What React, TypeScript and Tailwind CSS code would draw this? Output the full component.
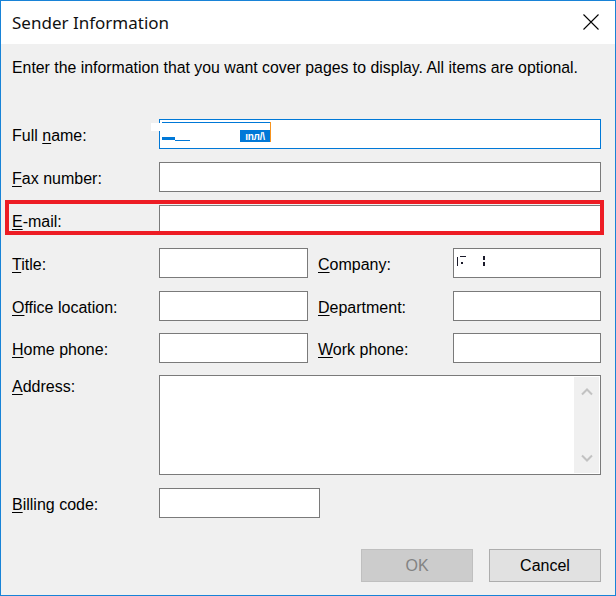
import React from "react";

const U = ({ children }: { children: React.ReactNode }) => (
  <span className="underline decoration-1 underline-offset-[2px]">{children}</span>
);

const Input = ({ className = "" }: { className?: string }) => (
  <div className={`h-[30px] bg-white border border-[#7a7a7a] ${className}`} />
);

const Label = ({ children, w }: { children: React.ReactNode; w: string }) => (
  <div className={`${w} shrink-0 pt-[3px] leading-[18px]`}>{children}</div>
);

export default function App() {
  return (
    <div
      className="w-[616px] h-[596px] border border-[#1883d7] bg-[#f0f0f0] flex flex-col text-[16px] text-black"
      style={{ fontFamily: '"Liberation Sans", Arial, sans-serif' }}
    >
      {/* Title bar */}
      <div className="h-[43px] bg-white flex items-center justify-between pl-[11px] pr-[16px] shrink-0">
        <div
          className="text-[17px] leading-[20px] text-[#111] pt-[1px]"
          style={{ fontFamily: '"Noto Sans", "Open Sans", sans-serif' }}
        >
          Sender Information
        </div>
        <svg width="16" height="16" viewBox="0 0 16 16" className="-mt-[1px]">
          <path d="M0.5 0.5 L15.5 15.5 M15.5 0.5 L0.5 15.5" stroke="#000" strokeWidth="1.1" fill="none" />
        </svg>
      </div>

      {/* Body */}
      <div className="flex flex-col pl-[11px] pr-[14px]">
        <div className="mt-[15px] leading-[18px] text-[15.85px]">
          Enter the information that you want cover pages to display. All items are optional.
        </div>

        {/* Full name */}
        <div className="relative flex items-center mt-[42px]">
          <Label w="w-[147px]">
            Full <U>n</U>ame:
          </Label>
          <div className="h-[30px] flex-1 bg-white border border-[#0078d7]" />
          {/* redaction / selection marks */}
          <div className="absolute left-[139px] top-[4px] w-[119px] h-[8px] bg-white" />
          <div className="absolute left-[150px] top-[3px] w-[108px] h-[1px] bg-[#0078d7]" />
          <div className="absolute left-[228px] top-[11px] w-[30px] h-[12px] bg-[#0078d7] flex items-end justify-center">
            <span className="text-white text-[10px] leading-[10px] font-bold tracking-tight">ınл/\</span>
          </div>
          <div className="absolute left-[150px] top-[18px] w-[13px] h-[3px] bg-[#0078d7]" />
          <div className="absolute left-[163px] top-[21px] w-[15px] h-[1px] bg-[#0078d7]" />
          <div className="absolute left-[258px] top-[3px] w-[1px] h-[20px] bg-[#f7931e]" />
        </div>

        {/* Fax */}
        <div className="flex items-center mt-[13px]">
          <Label w="w-[147px]">
            <U>F</U>ax number:
          </Label>
          <Input className="flex-1" />
        </div>

        {/* E-mail */}
        <div className="relative flex items-center mt-[13px]">
          <Label w="w-[147px]">
            <U>E</U>-mail:
          </Label>
          <Input className="flex-1" />
          <div className="absolute -left-[7px] -right-[3px] -top-[5px] bottom-0 border-[4px] border-[#ed1c24]" />
        </div>

        {/* Title / Company */}
        <div className="flex items-center mt-[13px]">
          <Label w="w-[147px]">
            <U>T</U>itle:
          </Label>
          <Input className="w-[149px]" />
          <div className="w-[10px]" />
          <Label w="w-[135px]">
            <U>C</U>ompany:
          </Label>
          <div className="relative flex-1 h-[30px] bg-white border border-[#7a7a7a]">
            <div className="absolute left-[3px] top-[8px] w-[1px] h-[9px] bg-[#1a1a2a]" />
            <div className="absolute left-[6px] top-[7px] w-[6px] h-[1px] bg-[#1a1a2a]" />
            <div className="absolute left-[7px] top-[13px] w-[2px] h-[2px] bg-[#1a1a2a]" />
            <div className="absolute left-[29px] top-[7px] w-[2px] h-[4px] bg-[#1a1a2a]" />
            <div className="absolute left-[29px] top-[13px] w-[2px] h-[4px] bg-[#1a1a2a]" />
          </div>
        </div>

        {/* Office / Department */}
        <div className="flex items-center mt-[13px]">
          <Label w="w-[147px]">
            <U>O</U>ffice location:
          </Label>
          <Input className="w-[149px]" />
          <div className="w-[10px]" />
          <Label w="w-[135px]">
            <U>D</U>epartment:
          </Label>
          <Input className="flex-1" />
        </div>

        {/* Home / Work */}
        <div className="flex items-center mt-[12px]">
          <Label w="w-[147px]">
            <U>H</U>ome phone:
          </Label>
          <Input className="w-[149px]" />
          <div className="w-[10px]" />
          <Label w="w-[135px]">
            <U>W</U>ork phone:
          </Label>
          <Input className="flex-1" />
        </div>

        {/* Address */}
        <div className="flex items-start mt-[12px]">
          <Label w="w-[147px]">
            <U>A</U>ddress:
          </Label>
          <div className="flex-1 h-[100px] bg-white border border-[#7a7a7a] flex justify-end p-[1px]">
            <div className="w-[25px] h-full bg-[#f0f0f0] flex flex-col items-center justify-between py-[10px]">
              <svg width="12" height="9" viewBox="0 0 12 9">
                <path d="M1 7.5 L6 2.5 L11 7.5" stroke="#c2c2c2" strokeWidth="2" fill="none" />
              </svg>
              <svg width="12" height="9" viewBox="0 0 12 9">
                <path d="M1 1.5 L6 6.5 L11 1.5" stroke="#c2c2c2" strokeWidth="2" fill="none" />
              </svg>
            </div>
          </div>
        </div>

        {/* Billing */}
        <div className="flex items-center mt-[13px]">
          <Label w="w-[147px]">
            <U>B</U>illing code:
          </Label>
          <Input className="w-[161px]" />
        </div>

        {/* Buttons */}
        <div className="flex justify-end gap-[16px] mt-[31px] pr-[0px]">
          <div className="w-[112px] h-[33px] bg-[#cccccc] border border-[#bfbfbf] flex items-center justify-center text-[#838383]">
            OK
          </div>
          <div className="w-[112px] h-[33px] bg-[#e1e1e1] border border-[#adadad] flex items-center justify-center">
            Cancel
          </div>
        </div>
      </div>
    </div>
  );
}
